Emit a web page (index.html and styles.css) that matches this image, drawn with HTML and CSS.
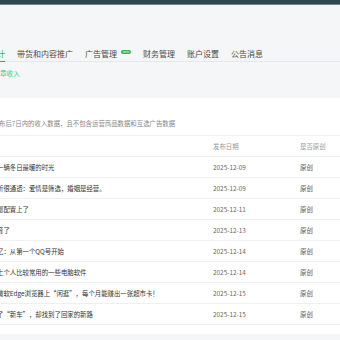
FILE: index.html
```html
<!DOCTYPE html>
<html lang="zh-CN">
<head>
    <meta charset="UTF-8">
    <title>收入数据</title>
    <link rel="stylesheet" href="styles.css">
</head>
<body>
    <div class="topbar"></div>

    <div class="header">
        <nav class="tabs">
            <span class="tab active">计</span>
            <span class="tab">带货和内容推广</span>
            <span class="tab">广告管理<span class="badge">new</span></span>
            <span class="tab">财务管理</span>
            <span class="tab">账户设置</span>
            <span class="tab">公告消息</span>
        </nav>
        <div class="subtabs">
            <span class="subtab active">章收入</span>
        </div>
    </div>

    <div class="panel">
        <p class="desc">布后7日内的收入数据，且不包含运营商品数据和互选广告数据</p>

        <div class="table">
            <div class="row head">
                <span class="title"></span>
                <span class="date">发布日期</span>
                <span class="orig">是否原创</span>
            </div>
            <div class="row">
                <span class="title">一辆冬日最暖的时光</span>
                <span class="date">2025-12-09</span>
                <span class="orig">原创</span>
            </div>
            <div class="row">
                <span class="title">析很通透：爱情是筛选，婚姻是经营。</span>
                <span class="date">2025-12-09</span>
                <span class="orig">原创</span>
            </div>
            <div class="row">
                <span class="title">都配置上了</span>
                <span class="date">2025-12-11</span>
                <span class="orig">原创</span>
            </div>
            <div class="row">
                <span class="title">育了</span>
                <span class="date">2025-12-13</span>
                <span class="orig">原创</span>
            </div>
            <div class="row">
                <span class="title">忆：从第一个QQ号开始</span>
                <span class="date">2025-12-14</span>
                <span class="orig">原创</span>
            </div>
            <div class="row">
                <span class="title">上个人比较常用的一些电脑软件</span>
                <span class="date">2025-12-14</span>
                <span class="orig">原创</span>
            </div>
            <div class="row">
                <span class="title">微软Edge浏览器上“闲逛”，每个月能赚出一张超市卡！</span>
                <span class="date">2025-12-15</span>
                <span class="orig">原创</span>
            </div>
            <div class="row">
                <span class="title">了“新车”，却找到了回家的新路</span>
                <span class="date">2025-12-15</span>
                <span class="orig">原创</span>
            </div>
        </div>
    </div>
</body>
</html>
```

FILE: styles.css
```css
* {
    box-sizing: border-box;
    margin: 0;
    padding: 0;
}
html, body {
    width: 340px;
    height: 340px;
    overflow: hidden;
    background-color: #f5f6f8;
    font-family: "Noto Sans CJK SC", "Noto Sans", sans-serif;
    color: #333;
}
.topbar {
    height: 5px;
    background-color: #2d474f;
    border-bottom: 1px solid #6a868c;
}

/* Kopfbereich mit Reitern */
.header {
    height: 93px;
    padding-top: 44.5px;
}
.tabs {
    display: flex;
    gap: 12px;
    margin-left: -3px;
    border-bottom: 1px solid #e6e7ea;
}
.tab {
    display: flex;
    align-items: center;
    font-size: 8px;
    line-height: 8px;
    padding-bottom: 3px;
    color: #4a4a4a;
    white-space: nowrap;
    margin-bottom: -1px;
    border-bottom: 1px solid transparent;
}
.tab.active {
    color: #07c160;
    border-bottom-color: #07c160;
}
.badge {
    display: inline-block;
    width: 10px;
    height: 4px;
    margin-left: 4px;
    margin-top: -3px;
    border-radius: 2px;
    background-color: #35b558;
    color: #fff;
    font-size: 3px;
    line-height: 4px;
    text-align: center;
    overflow: hidden;
}
.subtabs {
    margin-top: 8px;
    font-size: 6.6px;
    line-height: 7px;
}
.subtab.active {
    color: #3ecb7a;
}

/* Weisser Inhaltsbereich */
.panel {
    background-color: #fff;
    padding: 22px 0 9px;
}
.desc {
    font-size: 6.4px;
    line-height: 8px;
    color: #888;
    white-space: nowrap;
    margin-left: -1px;
    margin-bottom: 7px;
}
.table {
    border-top: 1px solid #eeeff1;
}
.row {
    display: grid;
    grid-template-columns: 213px 87px 1fr;
    align-items: center;
    height: 21px;
    border-bottom: 1px solid #eeeff1;
    font-size: 6.4px;
    white-space: nowrap;
}
.row .title {
    margin-left: -3px;
    color: #333;
    overflow: hidden;
}
.row .date {
    color: #666;
}
.row .orig {
    color: #555;
}
.row.head span {
    color: #999;
}
```
